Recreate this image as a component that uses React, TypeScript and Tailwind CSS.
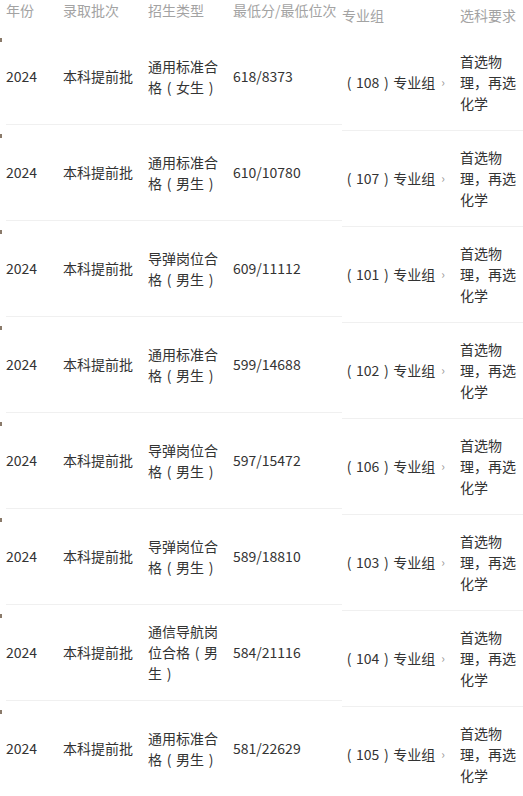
import React from "react";

const rows = [
  { type: "通用标准合格（女生）", score: "618/8373", group: "108" },
  { type: "通用标准合格（男生）", score: "610/10780", group: "107" },
  { type: "导弹岗位合格（男生）", score: "609/11112", group: "101" },
  { type: "通用标准合格（男生）", score: "599/14688", group: "102" },
  { type: "导弹岗位合格（男生）", score: "597/15472", group: "106" },
  { type: "导弹岗位合格（男生）", score: "589/18810", group: "103" },
  { type: "通信导航岗位合格（男生）", score: "584/21116", group: "104" },
  { type: "通用标准合格（男生）", score: "581/22629", group: "105" },
];

function P({ text }: { text: string }) {
  const chars = Array.from(text);
  return (
    <>
      {chars.map((ch, i) =>
        ch === "（" || ch === "）" ? (
          <span key={i} className="inline-block w-[14px] text-center">
            {ch === "（" ? "(" : ")"}
          </span>
        ) : (
          <span key={i}>{ch}</span>
        )
      )}
    </>
  );
}

export default function App() {
  return (
    <div
      className="flex bg-white text-[14px] leading-[21px] text-[#333]"
      style={{ fontFamily: '"Noto Sans CJK SC", "Noto Sans", sans-serif' }}
    >
      {/* left edge strip */}
      <div className="w-[6px] shrink-0 flex flex-col">
        <div className="h-[29px]" />
        {rows.map((_, i) => (
          <div key={i} className="h-[96px] pt-[9px]">
            <div className="w-[2px] h-[4px] bg-[#8a7a6a]" />
          </div>
        ))}
      </div>

      {/* left table */}
      <div className="w-[336px] shrink-0 flex flex-col">
        <div className="h-[29px] flex items-start text-[#a3a3a3]">
          <div className="w-[57px]">年份</div>
          <div className="w-[85px]">录取批次</div>
          <div className="w-[85px]">招生类型</div>
          <div className="w-[109px] whitespace-nowrap">最低分/最低位次</div>
        </div>
        {rows.map((r, i) => (
          <div
            key={i}
            className="h-[96px] flex items-center border-b border-[#f0f0f0]"
          >
            <div className="w-[57px]">2024</div>
            <div className="w-[85px]">本科提前批</div>
            <div className="w-[85px] pr-[15px]">
              <P text={r.type} />
            </div>
            <div className="w-[109px]">{r.score}</div>
          </div>
        ))}
      </div>

      {/* right table */}
      <div className="flex-1 flex flex-col">
        <div className="h-[35px] flex items-start pt-[5px] text-[#a3a3a3]">
          <div className="w-[118px]">专业组</div>
          <div className="flex-1 whitespace-nowrap">选科要求</div>
        </div>
        {rows.map((r, i) => (
          <div
            key={i}
            className="h-[96px] flex items-center border-b border-[#f0f0f0]"
          >
            <div className="w-[118px] flex items-center whitespace-nowrap">
              <span className="inline-block w-[14px] text-center">(</span>
              <span>{r.group}</span>
              <span className="inline-block w-[14px] text-center">)</span>
              <span>专业组</span>
              <span className="ml-[6px] text-[12px] text-[#999] -mt-[3px]">›</span>
            </div>
            <div className="w-[60px]">
              <P text="首选物理，再选化学" />
            </div>
          </div>
        ))}
      </div>
    </div>
  );
}
